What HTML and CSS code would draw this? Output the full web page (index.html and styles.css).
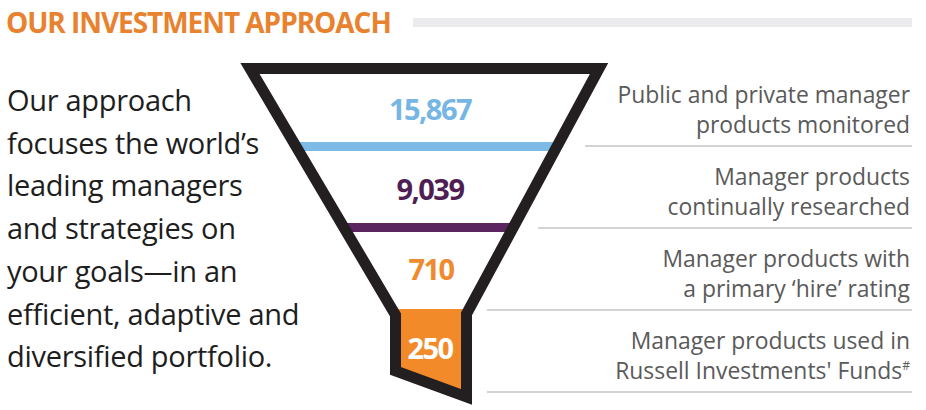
FILE: index.html
```html
<!DOCTYPE html>
<html lang="en">
<head>
<meta charset="utf-8">
<title>Our Investment Approach</title>
<link rel="stylesheet" href="styles.css">
</head>
<body>
<header class="header">
  <h1 class="title">OUR INVESTMENT APPROACH</h1>
  <div class="rule"></div>
</header>
<main class="main">
  <p class="intro">Our approach<br>focuses the world’s<br>leading managers<br>and strategies on<br>your goals—in an<br>efficient, adaptive and<br>diversified portfolio.</p>
  <div class="chart">
    <svg class="funnel" width="370" height="366" viewBox="240 44 370 366" xmlns="http://www.w3.org/2000/svg">
      <defs>
        <clipPath id="inside">
          <polygon points="250,68.5 599,68.5 466.5,314 466.5,397 395.5,371 395.5,315"/>
        </clipPath>
      </defs>
      <polygon points="250,68.5 599,68.5 466.5,314 466.5,397 395.5,371 395.5,315" fill="#ffffff"/>
      <g clip-path="url(#inside)">
        <rect x="240" y="142" width="370" height="9" fill="#7dbbe6"/>
        <rect x="240" y="223" width="370" height="9" fill="#5b2560"/>
        <rect x="380" y="309" width="100" height="100" fill="#f28a2a"/>
      </g>
      <polygon points="250,68.5 599,68.5 466.5,314 466.5,397 395.5,371 395.5,315" fill="none" stroke="#231f20" stroke-width="11" stroke-linejoin="miter" stroke-miterlimit="10"/>
      <text class="num num-blue" x="430" y="120">15,867</text>
      <text class="num num-purple" x="430" y="200">9,039</text>
      <text class="num num-orange" x="431" y="280">710</text>
      <text class="num num-white" x="430" y="359">250</text>
    </svg>
    <ul class="stages">
      <li class="stage stage-1">Public and private manager<br>products monitored</li>
      <li class="stage stage-2">Manager products<br>continually researched</li>
      <li class="stage stage-3">Manager products with<br>a primary ‘hire’ rating</li>
      <li class="stage stage-4">Manager products used in<br>Russell Investments' Funds<sup>#</sup></li>
    </ul>
  </div>
</main>
</body>
</html>
```
FILE: styles.css
```css
html, body {
  margin: 0;
  padding: 0;
  background: #ffffff;
}
body {
  width: 926px;
  height: 410px;
  overflow: hidden;
  font-family: "Open Sans", "Noto Sans", sans-serif;
}
.header {
  display: flex;
  align-items: center;
  height: 44px;
  padding: 0 14px 0 6px;
}
.title {
  margin: 0;
  font-family: "Open Sans", sans-serif;
  font-weight: 700;
  font-size: 28px;
  line-height: 30px;
  letter-spacing: -1.05px;
  color: #e8822e;
  white-space: nowrap;
}
.rule {
  flex: 1;
  height: 9px;
  margin-left: 22px;
  background: #ebebed;
}
.main {
  display: flex;
}
.intro {
  width: 233px;
  margin: 0;
  padding: 35px 0 0 7px;
  font-size: 29px;
  line-height: 42.7px;
  letter-spacing: -0.3px;
  color: #1e1e1e;
  white-space: nowrap;
}
.chart {
  display: grid;
  width: 672px;
}
.funnel, .stages {
  grid-area: 1 / 1;
}
.funnel {
  justify-self: start;
  display: block;
}
.num {
  font-family: "Open Sans", sans-serif;
  font-weight: 700;
  font-size: 29px;
  letter-spacing: -1.5px;
  text-anchor: middle;
}
.num-blue { fill: #76b6e4; }
.num-purple { fill: #4f1f53; }
.num-orange { fill: #ef8a2f; }
.num-white { fill: #ffffff; }
.stages {
  justify-self: end;
  list-style: none;
  margin: 0;
  padding: 21px 0 0 0;
  display: flex;
  flex-direction: column;
  align-items: flex-end;
}
.stage {
  box-sizing: border-box;
  height: 82px;
  padding: 15px 2px 0 0;
  border-bottom: 2px solid #d3d3d3;
  text-align: right;
  font-size: 22.9px;
  line-height: 29.5px;
  color: #5a5a5a;
  white-space: nowrap;
}
.stage-1 { width: 327px; }
.stage-2 { width: 374px; }
.stage-3, .stage-4 { width: 425px; }
.stage sup {
  font-size: 12px;
  line-height: 0;
  vertical-align: 9px;
}
```
